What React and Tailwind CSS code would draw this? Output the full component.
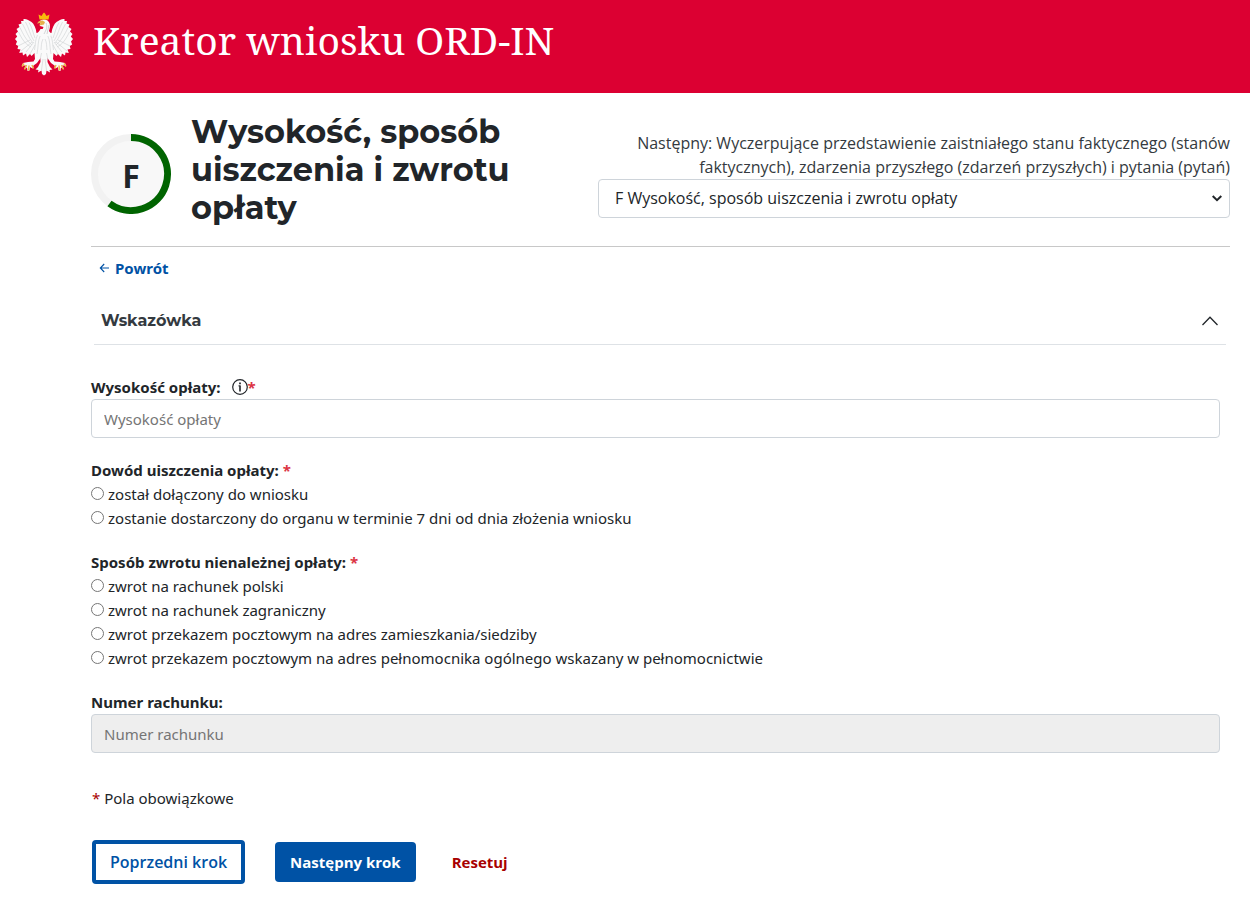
import React, { useState } from 'react';

const steps = ['F Wysokość, sposób uiszczenia i zwrotu opłaty'];

const proofOptions = [
  'został dołączony do wniosku',
  'zostanie dostarczony do organu w terminie 7 dni od dnia złożenia wniosku',
];

const refundOptions = [
  'zwrot na rachunek polski',
  'zwrot na rachunek zagraniczny',
  'zwrot przekazem pocztowym na adres zamieszkania/siedziby',
  'zwrot przekazem pocztowym na adres pełnomocnika ogólnego wskazany w pełnomocnictwie',
];

// Half of the eagle, mirrored for the other side
function EagleHalf() {
  return (
    <g>
      <path
        d="M29 17 L25.5 17 C24.5 19 23 21 21.5 21 C21 16 19 12 16.5 10 C14 8 11 6.5 8.5 7 L8.5 9 L6 9 L6.5 11.5 L3.5 12.5 L4.5 15 L1.5 17 L3 19.5 L0.5 22 L2.2 24.5 L0 27 L2 29.5 L0.8 32.5 L3.2 34 L2.5 37 L5.5 37.5 L4.2 41 L7.5 40.5 L8 43.5 L11 41.5 L12 45 L15 42 L16.5 44 L19.5 41 L20 47 L18.5 49.5 L13 50 L8 51 L7 53.5 L11 53.5 L9 57 L12 55.5 L12.5 59 L14.5 58.5 L15 55 L17.5 56.5 L18.5 53.5 L22 51 L25.5 46 L25.5 50 L23 55 L20.5 57.5 L23.5 58 L23 60.5 L26.5 58.5 L27 62 L29 63.5 Z"
        fill="#fafafa"
      />
      <path
        d="M14 10.5 C17 15 18 21 20 26 M10.5 10 C14 16 15 23 19 29 M7.5 12 C11 18 13 25 18 31 M5 15.5 C8 22 11 28 17 33 M3.5 20 C7 27 10 32 16 35 M19 30 L11 40 M20 33 L15 42 M17 30 L6 39 M15 28 L3 34 M22.5 23 C20 28 20.5 33 19.5 38 M25.5 23 C22.5 29 23.5 35 22 42 M28 27 C26 31 26.5 34 26 38 M26.5 41 L25 48 M28 47 L26.5 58"
        stroke="#cdd0d2"
        strokeWidth="0.6"
        fill="none"
      />
      <path
        d="M9 51.5 L7 54.5 M11.5 53 L9.5 57.5 M14 53.5 L13.5 58.5 M17 53 L18.5 56.5"
        stroke="#eeb84a"
        strokeWidth="1.5"
        fill="none"
      />
    </g>
  );
}

function Eagle() {
  return (
    <svg viewBox="0 0 58 64" className="w-[58px] h-16 shrink-0" aria-hidden="true">
      <EagleHalf />
      <g transform="translate(58 0) scale(-1 1)">
        <EagleHalf />
      </g>
      <path
        d="M25 9 C27 7 31 7 33 9 C36 12 35 16 34 19 L36 24 L23 24 C24 21 28 18 28.5 15 L25 14 Z"
        fill="#fafafa"
      />
      <path d="M31 11 C33 15 31 18 29 22 M34 13 L32 22" stroke="#c6c9cc" strokeWidth="0.8" fill="none" />
      <path d="M27.5 8.5 L24 9 L22 11.5 L25.5 11 L24 13.5 L29 12.5 L30 10 Z" fill="#e5b04c" />
      <path d="M24.5 7.5 L23.5 2.5 L26.5 4 L28 1.5 L29 0.5 L30 1.5 L31.5 4 L34.5 2.5 L33.5 7.5 Z" fill="#f8b90c" />
    </svg>
  );
}

function StepRing({ letter }) {
  return (
    <div className="grid place-items-center w-20 h-20 shrink-0">
      <svg viewBox="0 0 80 80" className="col-start-1 row-start-1 w-20 h-20" aria-hidden="true">
        <circle cx="40" cy="40" r="36.5" fill="#f8f8f8" stroke="#f2f2f2" strokeWidth="7" />
        <path d="M40 3.5 A36.5 36.5 0 1 1 18.5 69.5" fill="none" stroke="#006400" strokeWidth="7" />
      </svg>
      <span className="col-start-1 row-start-1 pt-1 text-[32px] leading-10 font-bold font-['Open_Sans',sans-serif]">
        {letter}
      </span>
    </div>
  );
}

function Required() {
  return <span className="text-[#dc3545]">*</span>;
}

function RadioGroup({ legend, name, options }) {
  return (
    <fieldset className="mb-5">
      <legend className="font-bold">
        {legend} <Required />
      </legend>
      {options.map((option) => (
        <label key={option} className="flex items-start gap-1">
          <input type="radio" name={name} className="mt-[5px] w-[13px] h-[13px] shrink-0" />
          <span>{option}</span>
        </label>
      ))}
    </fieldset>
  );
}

export default function App() {
  const [open, setOpen] = useState(true);

  return (
    <div className="bg-white text-[#212529] text-[15px] leading-6 font-['Noto_Sans',sans-serif]">
      <header className="flex items-start gap-5 bg-[#dc0032] px-[15px] pt-3 pb-[17px]">
        <Eagle />
        <span className="text-[39px] leading-[56px] text-white font-['Noto_Serif','Liberation_Serif',serif]">
          Kreator wniosku ORD-IN
        </span>
      </header>

      <main className="pl-[91px] pr-5">
        <div className="flex items-center pt-5 pb-[11px] border-b border-[#c8c8c8]">
          <StepRing letter="F" />
          <h1 className="w-[360px] ml-5 mb-2 text-[32px] leading-[38px] font-bold font-['Montserrat','Inter',sans-serif]">
            Wysokość, sposób uiszczenia i zwrotu opłaty
          </h1>
          <div className="flex-1 ml-[47px] text-right text-base font-['Open_Sans',sans-serif]">
            <label htmlFor="step" className="block text-[#343a40]">
              Następny: Wyczerpujące przedstawienie zaistniałego stanu faktycznego (stanów faktycznych), zdarzenia
              przyszłego (zdarzeń przyszłych) i pytania (pytań)
            </label>
            <div className="grid items-center">
              <select
                id="step"
                className="col-start-1 row-start-1 appearance-none w-full h-[39px] pl-4 pr-8 bg-white border border-[#ced4da] rounded"
              >
                {steps.map((step) => (
                  <option key={step}>{step}</option>
                ))}
              </select>
              <svg
                viewBox="0 0 10 7"
                className="col-start-1 row-start-1 justify-self-end w-[10px] h-[7px] mr-2 pointer-events-none"
                fill="none"
                stroke="#212529"
                strokeWidth="2"
              >
                <path d="M0.7 1 L5 5.2 L9.3 1" />
              </svg>
            </div>
          </div>
        </div>

        <a href="#back" className="flex items-center gap-[5px] w-fit mt-[9px] ml-2 font-bold text-[#0052a5]">
          <svg viewBox="0 0 10 10" className="w-[11px] h-[10px]" fill="none" stroke="currentColor" strokeWidth="1.1">
            <path d="M9.5 5 H1 M4.7 1 L0.8 5 L4.7 9" />
          </svg>
          Powrót
        </a>

        <div className="ml-[3px] mr-1 mt-[17px] border-b border-[#dee2e6]">
          <button
            type="button"
            onClick={() => setOpen(!open)}
            aria-expanded={open}
            className="flex items-center justify-between w-full pl-[7px] pr-2 pt-3 pb-[11px]"
          >
            <span className="text-base font-bold text-[#343a40] font-['Montserrat','Inter',sans-serif]">Wskazówka</span>
            <svg viewBox="0 0 16 10" className="w-4 h-[10px]" fill="none" stroke="#212529" strokeWidth="1.3">
              <path d="M0.5 9 L8 1.2 L15.5 9" />
            </svg>
          </button>
        </div>

        <form className="pt-[30px] pr-[10px]">
          <div className="mb-5">
            <label htmlFor="amount" className="flex items-center font-bold">
              Wysokość opłaty:
              <svg viewBox="0 0 16 16" className="w-4 h-4 ml-[11px]" fill="none" stroke="#212529">
                <circle cx="8" cy="8" r="7.3" strokeWidth="1.2" />
                <path d="M6.4 6.9 H8.2" strokeWidth="0.9" />
                <path d="M8 6.5 V12.6" strokeWidth="1.6" />
                <path d="M8 3.5 V5.2" strokeWidth="1.7" />
              </svg>
              <Required />
            </label>
            <input
              id="amount"
              type="text"
              placeholder="Wysokość opłaty"
              className="block w-full h-[39px] px-3 border border-[#ced4da] rounded placeholder:text-[#757575]"
            />
          </div>

          <RadioGroup legend="Dowód uiszczenia opłaty:" name="proof" options={proofOptions} />
          <RadioGroup legend="Sposób zwrotu nienależnej opłaty:" name="refund" options={refundOptions} />

          <label htmlFor="account" className="block font-bold">
            Numer rachunku:
          </label>
          <input
            id="account"
            type="text"
            disabled
            placeholder="Numer rachunku"
            className="block w-full h-[39px] px-3 bg-[#eeeeee] border border-[#ced4da] rounded placeholder:text-[#757575]"
          />

          <p className="mt-[33px] ml-px">
            <span className="text-[#a80000]">*</span> Pola obowiązkowe
          </p>

          <div className="flex items-center mt-[30px] pb-4 font-['Open_Sans',sans-serif]">
            <button
              type="button"
              className="h-11 px-[14px] ml-px text-base font-semibold text-[#0052a5] border-4 border-[#0052a5] rounded"
            >
              Poprzedni krok
            </button>
            <button type="button" className="h-10 px-[15px] ml-[30px] font-bold text-white bg-[#0052a5] rounded">
              Następny krok
            </button>
            <button type="reset" className="h-10 ml-9 font-bold text-[#a80000]">
              Resetuj
            </button>
          </div>
        </form>
      </main>
    </div>
  );
}
